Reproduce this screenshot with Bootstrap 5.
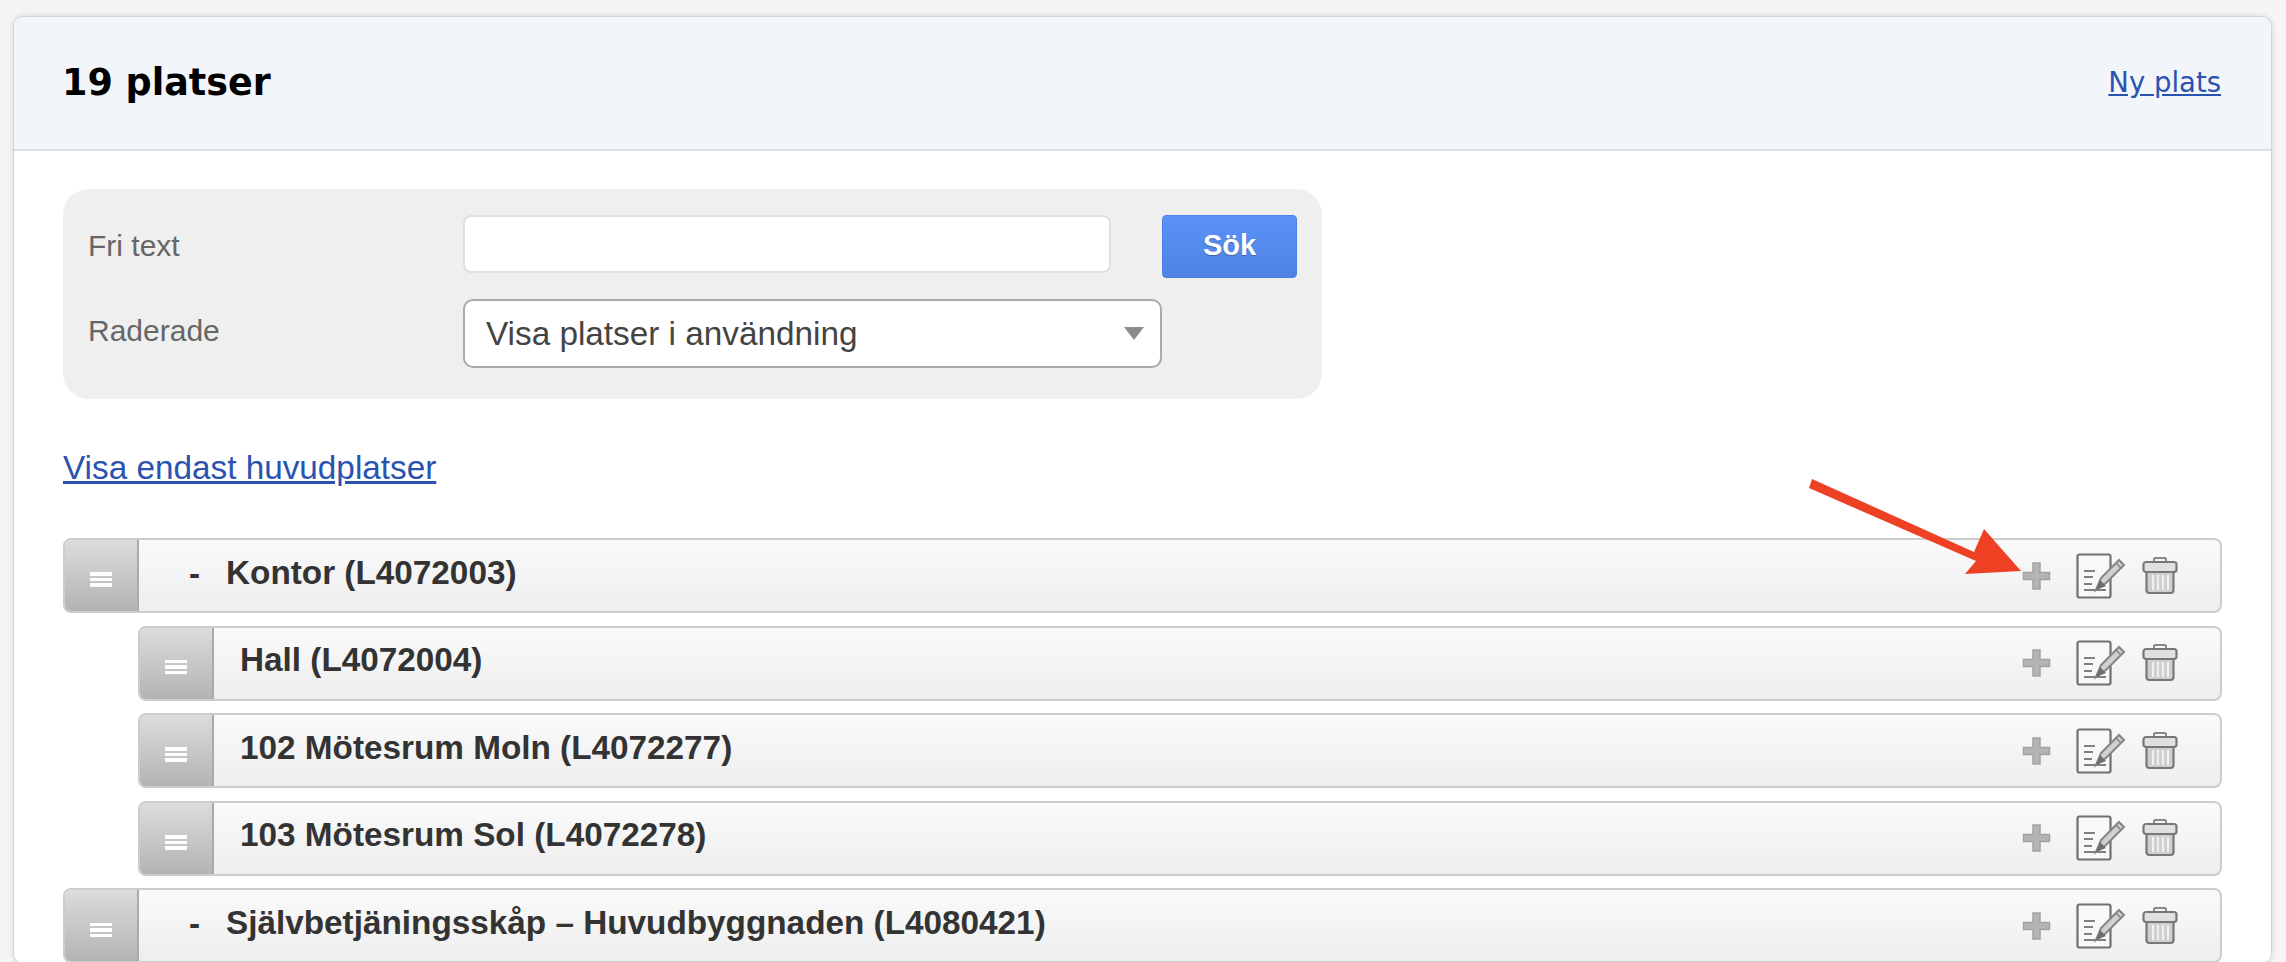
<!DOCTYPE html>
<html lang="sv">
<head>
    <meta charset="UTF-8">
    <title>19 platser</title>
    <link href="https://cdn.jsdelivr.net/npm/bootstrap@5.3.2/dist/css/bootstrap.min.css" rel="stylesheet">
    <style>
        html, body {
          height: 100%;
          overflow: hidden;
        }
        body {
          background-color: #f5f5f5;
          font-family: "Liberation Sans", Arial, sans-serif;
          color: #333;
          padding: 16px 14px 0 13px;
        }
        .place-card {
          position: relative;
          border: 1px solid #d4d4d4;
          border-radius: 10px;
          box-shadow: 0 0 6px rgba(0,0,0,0.12);
          background-color: #fff;
        }
        .place-head {
          height: 134px;
          padding: 0 50px 0 48px;
          background-color: #f2f5f9;
          border-bottom: 2px solid #dcdfe3;
          border-radius: 10px 10px 0 0;
        }
        .place-title {
          font-family: "DejaVu Sans", Verdana, sans-serif;
          font-weight: 700;
          font-size: 36.500px;
          color: #000;
          margin: 0;
        }
        .new-link {
          font-family: "DejaVu Sans", Verdana, sans-serif;
          font-size: 27.500px;
          color: #2a52b0;
        }
        .place-body {
          padding: 38px 49px 0 49px;
        }
        .search-panel {
          width: 1259px;
          height: 210px;
          padding: 26px 25px 0;
          background-color: #efefef;
          border-radius: 26px;
        }
        .search-label {
          width: 375px;
          font-size: 30px;
          color: #666;
        }
        .text-box {
          width: 648px;
          height: 58px;
          border: 2px solid #e0e0e0;
          border-radius: 8px;
          background-color: #fff;
        }
        .search-btn {
          width: 135px;
          height: 63px;
          margin-left: 51px;
          padding: 0 0 2px;
          font-size: 29px;
          font-weight: 700;
          color: #fff;
          text-shadow: 0 1px 1px rgba(0,0,0,0.3);
          background: linear-gradient(#5b92f8, #4f83e2);
          border: 1px solid #4a80e8;
          border-radius: 4px;
        }
        .search-line-two {
          margin-top: 21px;
        }
        .search-line-two .search-label {
          margin-top: -6px;
        }
        .search-line-one .search-label {
          margin-top: 8px;
        }
        .select-box {
          width: 699px;
          height: 69px;
          padding: 0 21px;
          font-size: 33.300px;
          color: #444;
          background-color: #fff;
          border: 2px solid #aaa;
          border-radius: 10px;
        }
        .select-caret {
          width: 0;
          height: 0;
          border-left: 10px solid transparent;
          border-right: 10px solid transparent;
          border-top: 13px solid #8c8c8c;
          margin-right: -5px;
        }
        .only-main {
          display: block;
          margin-top: 47px;
          margin-bottom: 48px;
          line-height: 44px;
          font-size: 33.300px;
          color: #2a52b0;
        }
        .place-list {
          gap: 12.600px;
        }
        .place-row {
          height: 75px;
          background: linear-gradient(#fafafa, #eee);
          border: 2px solid #ccc;
          border-radius: 8px;
          overflow: hidden;
          font-size: 33.300px;
          font-weight: 700;
          color: #333;
        }
        .place-row.sub-row {
          margin-left: 75px;
        }
        .row-handle {
          width: 74px;
          height: 100%;
          flex: none;
          background: linear-gradient(#dcdcdc, #b3b3b3);
          border-right: 2px solid #aaa;
          gap: 2px;
          padding-top: 8px;
        }
        .row-handle i {
          display: block;
          width: 22px;
          height: 3.500px;
          background-color: #fff;
        }
        .row-dash {
          width: 37px;
          margin-left: 50px;
          margin-top: -4px;
          flex: none;
        }
        .row-name {
          margin-left: 26px;
          margin-top: -6px;
        }
        .row-dash + .row-name {
          margin-left: 0;
        }
        .row-tools {
          margin-left: auto;
          margin-right: 42px;
          flex: none;
        }
        .row-tools svg {
          display: block;
        }
        .trash-icon {
          margin-left: 16px;
        }
        .note-arrow {
          position: absolute;
          left: -13px;
          top: -16px;
          pointer-events: none;
        }
    </style>
</head>
<body>

<div class="place-card">
    <div class="place-head d-flex align-items-center justify-content-between">
        <h1 class="place-title">19 platser</h1>
        <a class="new-link" href="#">Ny plats</a>
    </div>

    <div class="place-body">
        <form class="search-panel">
            <div class="search-line-one d-flex align-items-start">
                <div class="search-label">Fri text</div>
                <div class="text-box"></div>
                <button type="button" class="search-btn">Sök</button>
            </div>
            <div class="search-line-two d-flex align-items-center">
                <div class="search-label">Raderade</div>
                <div class="select-box d-flex align-items-center justify-content-between">
                    <span>Visa platser i användning</span>
                    <span class="select-caret"></span>
                </div>
            </div>
        </form>

        <a class="only-main" href="#">Visa endast huvudplatser</a>

        <div class="place-list d-flex flex-column" id="placeList"></div>
    </div>

    <svg class="note-arrow" width="2286" height="962" viewBox="0 0 2286 962">
        <polygon fill="#ee4023" points="1811,478 1808,487 1975,560 1964,573 2020,570 1983,528 1973,551"/>
    </svg>
</div>

<template id="toolIcons">
    <div class="row-tools d-flex align-items-center">
        <svg width="30" height="30" viewBox="0 0 30 30">
            <path d="M11 2h7v9.500h9.500v7H18V28h-7v-9.500H1.500v-7H11z" fill="#b4b4b4" stroke="#a2a2a2" stroke-width="1.500"/>
        </svg>
        <svg class="ms-4" width="50" height="46" viewBox="0 0 50 46">
            <rect x="1.500" y="1.500" width="33" height="43" rx="2" fill="#f8f8f8" stroke="#707070" stroke-width="2.200"/>
            <path d="M8 18h11M8 24h9M8 31h8M8 37h22" stroke="#808080" stroke-width="2" fill="none"/>
            <path d="M20 37l5-12 18-18 5 5-18 18z" fill="#d0d0d0" stroke="#858585" stroke-width="2"/>
            <path d="M20 37l4-10 6 6z" fill="#6e6e6e"/>
            <path d="M40 10l5 5" stroke="#858585" stroke-width="1.600"/>
        </svg>
        <svg class="trash-icon" width="36" height="40" viewBox="0 0 36 40">
            <path d="M12 6V3.500q0-1.500 1.500-1.500h9q1.500 0 1.500 1.500V6" fill="none" stroke="#888" stroke-width="2"/>
            <rect x="1.500" y="6" width="33" height="10" rx="2.500" fill="#e0e0e0" stroke="#777" stroke-width="2.200"/>
            <path d="M4.500 16h27v18q0 3-3 3h-21q-3 0-3-3z" fill="#cfcfcf" stroke="#777" stroke-width="2.200"/>
            <path d="M11 19v15M16 19v15M21 19v15M26 19v15" stroke="#f0f0f0" stroke-width="2"/>
        </svg>
    </div>
</template>

<script>
    const places = [
      { name: 'Kontor (L4072003)', main: true },
      { name: 'Hall (L4072004)' },
      { name: '102 Mötesrum Moln (L4072277)' },
      { name: '103 Mötesrum Sol (L4072278)' },
      { name: 'Självbetjäningsskåp – Huvudbyggnaden (L4080421)', main: true }
    ];

    const list = document.getElementById('placeList');
    const tools = document.getElementById('toolIcons');

    places.forEach(place => {
      const row = document.createElement('div');
      row.className = 'place-row d-flex align-items-center' + (place.main ? '' : ' sub-row');
      row.innerHTML = `
        <div class="row-handle d-flex flex-column align-items-center justify-content-center"><i></i><i></i><i></i></div>
        ${place.main ? '<span class="row-dash">-</span>' : ''}
        <span class="row-name">${place.name}</span>
      `;
      row.appendChild(tools.content.cloneNode(true));
      list.appendChild(row);
    });
</script>

<script src="https://cdn.jsdelivr.net/npm/bootstrap@5.3.2/dist/js/bootstrap.bundle.min.js"></script>
</body>
</html>
